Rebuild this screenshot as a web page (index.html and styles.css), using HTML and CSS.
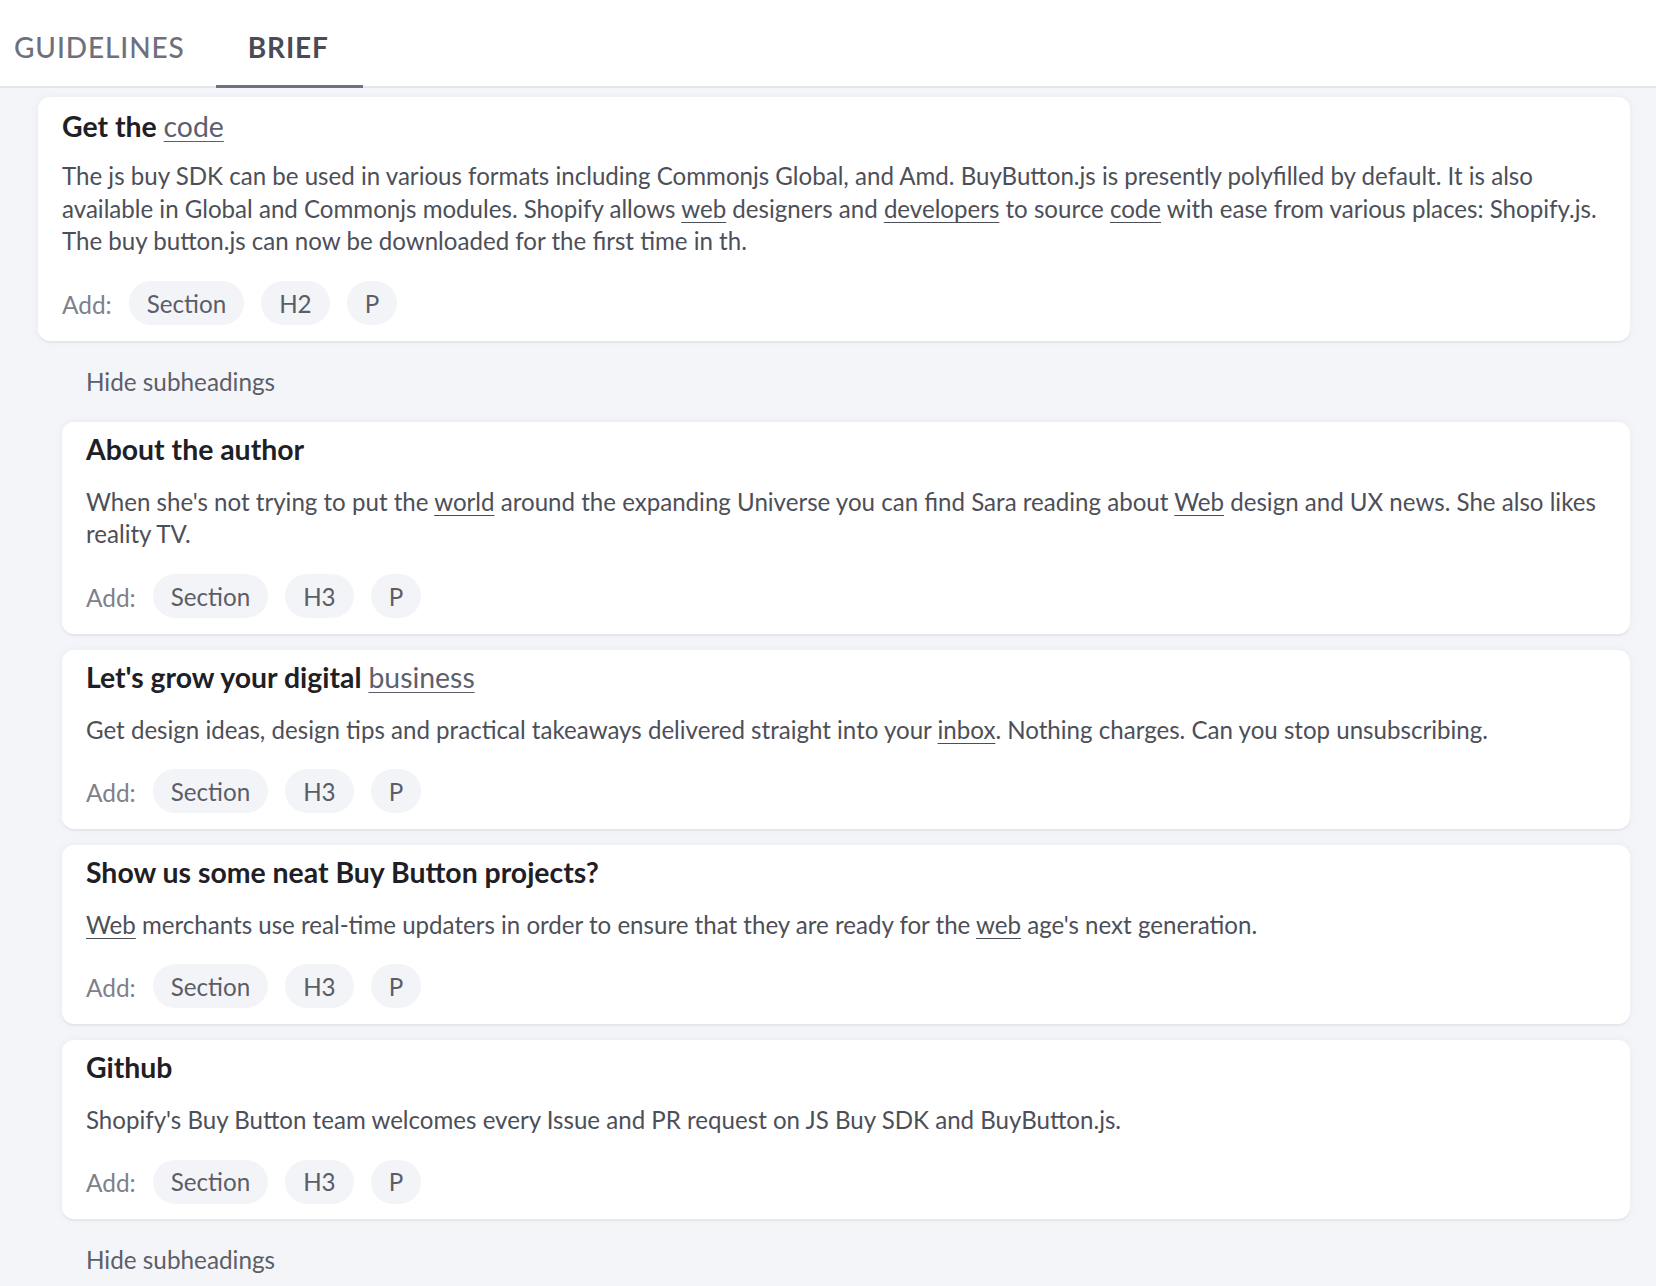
FILE: index.html
```html
<!DOCTYPE html>
<html lang="en">
<head>
<meta charset="utf-8">
<title>Brief</title>
<link rel="stylesheet" href="styles.css">
</head>
<body>
<nav class="tabs">
  <div class="tab first">GUIDELINES</div>
  <div class="tab active">BRIEF</div>
</nav>
<main class="content">
  <section class="card">
    <h2 class="title">Get the <a class="tlink">code</a></h2>
    <p class="text">The js buy SDK can be used in various formats including Commonjs Global, and Amd. BuyButton.js is presently polyfilled by default. It is also available in Global and Commonjs modules. Shopify allows <a>web</a> designers and <a>developers</a> to source <a>code</a> with ease from various places: Shopify.js. The buy button.js can now be downloaded for the first time in th.</p>
    <div class="add"><span class="add-label">Add:</span><span class="chip">Section</span><span class="chip">H2</span><span class="chip">P</span></div>
  </section>
  <div class="subs">
    <div class="toggle">Hide subheadings</div>
    <section class="card">
      <h3 class="title">About the author</h3>
      <p class="text">When she's not trying to put the <a>world</a> around the expanding Universe you can find Sara reading about <a>Web</a> design and UX news. She also likes reality TV.</p>
      <div class="add"><span class="add-label">Add:</span><span class="chip">Section</span><span class="chip">H3</span><span class="chip">P</span></div>
    </section>
    <section class="card">
      <h3 class="title">Let's grow your digital <a class="tlink">business</a></h3>
      <p class="text">Get design ideas, design tips and practical takeaways delivered straight into your <a>inbox</a>. Nothing charges. Can you stop unsubscribing.</p>
      <div class="add"><span class="add-label">Add:</span><span class="chip">Section</span><span class="chip">H3</span><span class="chip">P</span></div>
    </section>
    <section class="card">
      <h3 class="title">Show us some neat Buy Button projects?</h3>
      <p class="text"><a>Web</a> merchants use real-time updaters in order to ensure that they are ready for the <a>web</a> age's next generation.</p>
      <div class="add"><span class="add-label">Add:</span><span class="chip">Section</span><span class="chip">H3</span><span class="chip">P</span></div>
    </section>
    <section class="card">
      <h3 class="title">Github</h3>
      <p class="text">Shopify's Buy Button team welcomes every Issue and PR request on JS Buy SDK and BuyButton.js.</p>
      <div class="add"><span class="add-label">Add:</span><span class="chip">Section</span><span class="chip">H3</span><span class="chip">P</span></div>
    </section>
    <div class="toggle">Hide subheadings</div>
  </div>
</main>
</body>
</html>
```
FILE: styles.css
```css
* { box-sizing: border-box; }
html, body { margin: 0; padding: 0; }
body {
  font-family: Lato, "Noto Sans", "Liberation Sans", sans-serif;
  background: #f4f5f9;
  color: #4d4f58;
  height: 1286px;
  overflow: hidden;
}
.tabs {
  display: flex;
  height: 88px;
  background: #ffffff;
  border-bottom: 2px solid #e4e5ea;
}
.tab {
  display: flex;
  align-items: center;
  padding: 8px 34px 0 32px;
  font-size: 28px;
  letter-spacing: 0.9px;
  color: #6e707c;
  font-weight: 500;
}
.tab.first { padding-left: 14px; padding-right: 31px; }
.tab.active {
  color: #4a4b55;
  font-weight: 700;
  box-shadow: inset 0 -3px 0 #6f7080;
  margin-bottom: -2px;
  padding-bottom: 2px;
}
.content {
  padding: 9px 26px 0 38px;
}
.card {
  background: #ffffff;
  border-radius: 12px;
  padding: 12px 24px 15.5px 24px;
  box-shadow: 0 2px 0 #e6e7ec, 0 0 6px rgba(200, 203, 215, 0.25);
}
.title {
  margin: 0;
  font-size: 28.4px;
  line-height: 34px;
  font-weight: 700;
  color: #1f2025;
}
.tlink {
  font-weight: 400;
  color: #5d5f6e;
  text-decoration: underline;
  text-underline-offset: 4px;
  text-decoration-thickness: 1px;
}
.text {
  margin: 17px 0 0 0;
  font-size: 24.1px;
  line-height: 32.7px;
  color: #4d4f58;
}
.text a {
  color: inherit;
  text-decoration: underline;
  text-underline-offset: 4px;
  text-decoration-thickness: 1px;
}
.add {
  margin-top: 23px;
  display: flex;
  align-items: center;
  gap: 17px;
}
.add-label {
  font-size: 24.4px;
  color: #7e808a;
  position: relative;
  top: 1px;
}
.chip {
  height: 44px;
  padding: 0 18px;
  border-radius: 22px;
  background: #f3f4f8;
  display: inline-flex;
  align-items: center;
  font-size: 24.2px;
  color: #5b5d67;
}
.subs {
  padding-left: 24px;
}
.subs .card {
  padding-top: 10.5px;
  padding-bottom: 15.5px;
}
.subs .card .text { margin-top: 19.5px; }
.subs .card + .card { margin-top: 16px; }
.toggle {
  padding: 0 0 0 24px;
  height: 81px;
  display: flex;
  align-items: center;
  font-size: 24.3px;
  color: #5c5e68;
}
```
